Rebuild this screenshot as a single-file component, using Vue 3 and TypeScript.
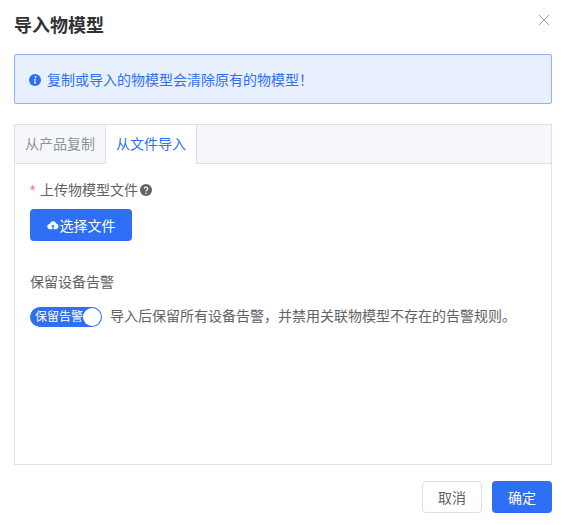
<script setup lang="ts">
const tabs: string[] = ['从产品复制', '从文件导入']
</script>

<template>
  <div class="modal">
    <header class="head">
      <h1 class="title">导入物模型</h1>
      <svg class="close" viewBox="0 0 12 12" width="12" height="12"><path d="M1 1L11 11M11 1L1 11" stroke="#9a9ea6" stroke-width="1" fill="none" /></svg>
    </header>
    <div class="alert">
      <svg class="info" viewBox="0 0 12 12" width="12" height="12">
        <circle cx="6" cy="6" r="6" fill="#2f6ff5" />
        <path d="M6.6 2.2a.8.8 0 1 1-.01 0zM5 5h1.9L6.2 8.6h.8v.8H5l.7-3.6H5z" fill="#fff" />
      </svg>
      <span>复制或导入的物模型会清除原有的物模型！</span>
    </div>
    <section class="tabs">
      <nav class="tabbar">
        <div v-for="(t, i) in tabs" :key="t" class="tab" :class="{ active: i === 1 }">{{ t }}</div>
      </nav>
      <div class="pane">
        <div class="label"><span class="star">*</span><span>上传物模型文件</span>
          <svg class="help" viewBox="0 0 12 12" width="12" height="12">
            <circle cx="6" cy="6" r="6" fill="#606266" />
            <path d="M4.3 4.7a1.7 1.7 0 1 1 2.6 1.4c-.6.4-.9.6-.9 1.3" stroke="#fff" stroke-width="1.2" fill="none" />
            <circle cx="6" cy="9.2" r=".75" fill="#fff" />
          </svg>
        </div>
        <button class="btn primary upload" type="button">
          <svg class="cloud" viewBox="0 0 12 10" width="12" height="10"><path d="M3 9.2A2.6 2.6 0 0 1 2.7 4 3.4 3.4 0 0 1 9.2 3.5 2.9 2.9 0 0 1 9.2 9.2H6.6V6.6H8L6 4.4 4 6.6h1.4v2.6z" fill="#fff" /></svg><span>选择文件</span>
        </button>
        <div class="label second">保留设备告警</div>
        <div class="row">
          <div class="switch"><span>保留告警</span><i class="knob"></i></div>
          <span class="hint">导入后保留所有设备告警，并禁用关联物模型不存在的告警规则。</span>
        </div>
      </div>
    </section>
    <footer class="foot">
      <button class="btn ghost" type="button"><span>取消</span></button>
      <button class="btn primary confirm" type="button"><span>确定</span></button>
    </footer>
  </div>
</template>

<style>
html, body { margin: 0; background: #fff; }
</style>

<style scoped>
.modal {
  width: 565px;
  height: 525px;
  box-sizing: border-box;
  padding: 14px 13px 12px 14px;
  display: flex;
  flex-direction: column;
  font-family: "Liberation Sans", "Noto Sans CJK SC", sans-serif;
  font-size: 14px;
  color: #606266;
  background: #fff;
}
.head {
  display: flex;
  justify-content: space-between;
  align-items: flex-start;
  height: 40px;
}
.title { margin: 0; font-size: 18px; line-height: 24px; font-weight: 700; color: #303133; }
.close { margin-right: 2px; }
.alert {
  height: 50px;
  box-sizing: border-box;
  border: 1px solid #8fb2f8;
  border-radius: 2px;
  background: #e8effd;
  color: #2f6ff5;
  display: flex;
  align-items: center;
  gap: 6px;
  padding: 0 14px;
  margin-bottom: 20px;
}
.info { margin-top: 2px; }
.tabs {
  flex: 1;
  border: 1px solid #dfe1e8;
  display: flex;
  flex-direction: column;
  min-height: 0;
}
.tabbar {
  display: flex;
  height: 38px;
  background: #f5f7fa;
  border-bottom: 1px solid #dfe1e8;
}
.tab {
  width: 90px;
  line-height: 38px;
  text-align: center;
  color: #909399;
}
.tab.active {
  width: 92px;
  box-sizing: border-box;
  height: 39px;
  background: #fff;
  color: #2f6ff5;
  border-left: 1px solid #dfe1e8;
  border-right: 1px solid #dfe1e8;
}
.pane { padding: 16px 15px 0; }
.label { line-height: 20px; display: flex; align-items: center; }
.star { color: #f56c6c; width: 10px; }
.help { margin-left: 2px; }
.btn {
  font-family: inherit;
  font-size: 14px;
  border-radius: 4px;
  cursor: pointer;
  padding: 0 0 1px;
}
.primary { background: #2f6ff5; color: #fff; border: 0; }
.upload {
  margin-top: 9px;
  width: 102px;
  height: 32px;
  display: flex;
  align-items: center;
  justify-content: center;
  gap: 1px;
}
.cloud { margin-top: 1px; }
.second { margin-top: 31px; }
.row { display: flex; align-items: center; margin-top: 15px; height: 20px; }
.switch {
  width: 72px;
  height: 20px;
  border-radius: 10px;
  background: #2f6ff5;
  color: #fff;
  font-size: 12px;
  line-height: 18px;
  display: flex;
  align-items: center;
  justify-content: space-between;
  padding: 0 1px 0 5px;
  box-sizing: border-box;
  white-space: nowrap;
}
.knob { width: 18px; height: 18px; border-radius: 50%; background: #fff; flex: none; }
.hint { margin-left: 8px; white-space: nowrap; line-height: 18px; padding-bottom: 2px; }
.foot { display: flex; justify-content: flex-end; gap: 10px; padding-top: 16px; }
.ghost { width: 60px; height: 32px; background: #fff; border: 1px solid #dcdfe6; color: #606266; }
.confirm { width: 60px; height: 32px; }
</style>
